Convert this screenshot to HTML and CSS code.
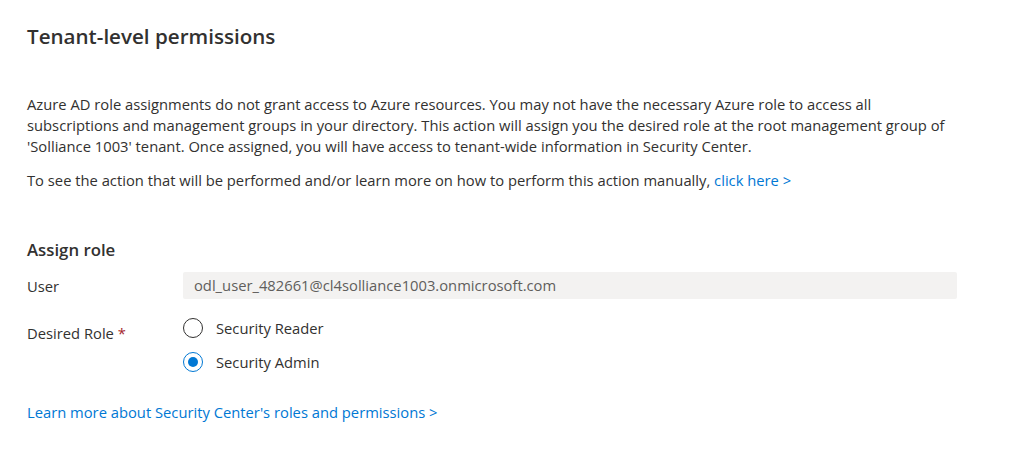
FILE: index.html
```html
<!DOCTYPE html>
<html>
<head>
<meta charset="utf-8">
<link rel="stylesheet" href="styles.css">
</head>
<body>
<div class="page">
  <h1 class="title">Tenant-level permissions</h1>
  <p class="para first">Azure AD role assignments do not grant access to Azure resources. You may not have the necessary Azure role to access all<br>subscriptions and management groups in your directory. This action will assign you the desired role at the root management group of<br>'Solliance 1003' tenant. Once assigned, you will have access to tenant-wide information in Security Center.</p>
  <p class="para">To see the action that will be performed and/or learn more on how to perform this action manually, <a class="link" href="#">click here &gt;</a></p>
  <h2 class="section">Assign role</h2>
  <div class="row user-row">
    <div class="label">User</div>
    <div class="input">odl_user_482661@cl4solliance1003.onmicrosoft.com</div>
  </div>
  <div class="row role-row">
    <div class="label">Desired Role <span class="req">*</span></div>
    <div class="radios">
      <div class="radio"><span class="circle"></span><span>Security Reader</span></div>
      <div class="radio"><span class="circle checked"></span><span>Security Admin</span></div>
    </div>
  </div>
  <a class="link bottom" href="#">Learn more about Security Center's roles and permissions &gt;</a>
</div>
</body>
</html>
```
FILE: styles.css
```css
* { box-sizing: border-box; }
body {
  margin: 0;
  background: #ffffff;
  color: #323130;
  font-family: "Segoe UI", "Open Sans", sans-serif;
  font-size: 14.75px;
}
.page {
  padding: 22px 0 0 27px;
}
.title {
  margin: 0;
  font-size: 20.6px;
  line-height: 28px;
  font-weight: 600;
}
.para {
  margin: 0;
  line-height: 21px;
}
.para.first {
  margin-top: 44px;
}
.para + .para {
  margin-top: 13px;
}
.link {
  color: #0078d4;
  text-decoration: none;
}
.section {
  margin: 49px 0 0 0;
  font-size: 16.8px;
  line-height: 20px;
  font-weight: 600;
}
.row {
  display: flex;
}
.label {
  width: 156px;
  flex: none;
}
.user-row {
  margin-top: 12px;
  align-items: center;
}
.input {
  width: 774px;
  height: 27px;
  background: #f3f2f1;
  border-radius: 2px;
  color: #605e5c;
  padding: 0 11px;
  line-height: 27px;
}
.role-row {
  margin-top: 19px;
}
.role-row .label {
  padding-top: 5px;
}
.req {
  color: #a4262c;
}
.radios {
  display: flex;
  flex-direction: column;
  gap: 14px;
}
.radio {
  display: flex;
  align-items: center;
  gap: 13px;
  height: 20px;
}
.circle {
  width: 20px;
  height: 20px;
  border-radius: 50%;
  border: 1px solid #323130;
  flex: none;
  position: relative;
}
.circle.checked {
  border-color: #0078d4;
}
.circle.checked::after {
  content: "";
  position: absolute;
  left: 4px;
  top: 4px;
  width: 10px;
  height: 10px;
  border-radius: 50%;
  background: #0078d4;
}
.bottom {
  display: inline-block;
  margin-top: 30px;
  line-height: 20px;
}
```
